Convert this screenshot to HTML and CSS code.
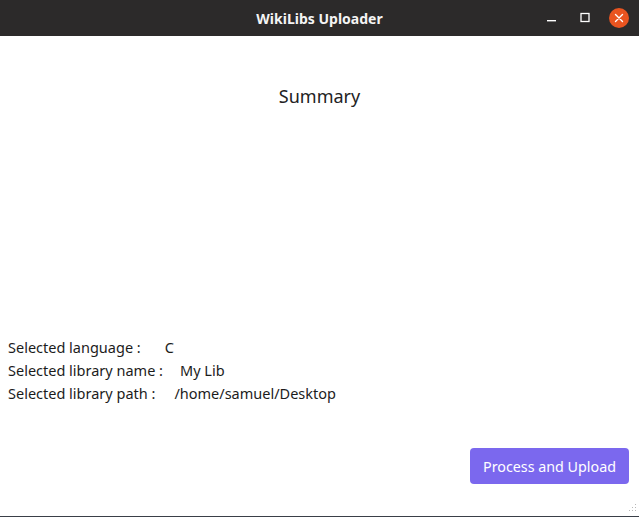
FILE: index.html
```html
<!DOCTYPE html>
<html>
<head>
<meta charset="utf-8">
<link rel="stylesheet" href="styles.css">
</head>
<body>
<div class="window">
  <header class="titlebar">
    <div class="title">WikiLibs Uploader</div>
    <div class="controls">
      <span class="ctl"><svg width="12" height="12" viewBox="0 0 12 12"><rect x="1" y="8" width="9" height="1.4" fill="#fff"/></svg></span>
      <span class="ctl"><svg width="12" height="12" viewBox="0 0 12 12"><rect x="2" y="1.5" width="8" height="8" fill="none" stroke="#fff" stroke-width="1.3"/></svg></span>
      <span class="ctl close"><svg width="10" height="10" viewBox="0 0 10 10"><path d="M1.5 1.5 L8.5 8.5 M8.5 1.5 L1.5 8.5" stroke="#fff" stroke-width="1.4" stroke-linecap="round"/></svg></span>
    </div>
  </header>
  <main class="content">
    <h1 class="heading">Summary</h1>
    <div class="info">
      <div class="row"><span class="label">Selected language :</span><span class="val v1">C</span></div>
      <div class="row"><span class="label">Selected library name :</span><span class="val v2">My Lib</span></div>
      <div class="row"><span class="label">Selected library path :</span><span class="val v3">/home/samuel/Desktop</span></div>
    </div>
    <div class="actions">
      <button class="btn">Process and Upload</button>
    </div>
  </main>
  <svg class="grip" width="10" height="10" viewBox="0 0 10 10">
    <g fill="#b8b8b8">
      <rect x="8" y="0" width="1" height="1"/>
      <rect x="5" y="3" width="1" height="1"/><rect x="8" y="3" width="1" height="1"/>
      <rect x="2" y="6" width="1" height="1"/><rect x="5" y="6" width="1" height="1"/><rect x="8" y="6" width="1" height="1"/>
    </g>
  </svg>
</div>
</body>
</html>
```

FILE: styles.css
```css
* { box-sizing: border-box; }
html, body { margin: 0; padding: 0; }
body {
  width: 639px;
  height: 517px;
  background: #3a3f48;
  font-family: "Noto Sans", "Open Sans", sans-serif;
  overflow: hidden;
}
.window {
  position: relative;
  width: 639px;
  height: 516px;
  background: #ffffff;
  display: flex;
  flex-direction: column;
}
.titlebar {
  height: 36px;
  background: #2c2a2a;
  display: flex;
  align-items: center;
  justify-content: center;
  position: relative;
}
.title {
  color: #f4f4f4;
  font-weight: bold;
  font-size: 14px;
}
.controls {
  position: absolute;
  right: 10px;
  top: 0;
  height: 36px;
  display: flex;
  align-items: center;
  gap: 15px;
}
.ctl {
  width: 18px;
  height: 18px;
  display: flex;
  align-items: center;
  justify-content: center;
}
.ctl.close {
  width: 20px;
  height: 20px;
  background: #e95420;
  border-radius: 50%;
}
.content {
  flex: 1;
  display: flex;
  flex-direction: column;
}
.heading {
  margin: 48px 0 0;
  text-align: center;
  font-weight: normal;
  font-size: 18px;
  line-height: 24px;
  color: #222;
}
.info {
  margin-top: 228px;
  padding-left: 8px;
  font-size: 14.5px;
  color: #1c1c1c;
}
.row {
  height: 23px;
  line-height: 23px;
  display: flex;
}
.v1 { margin-left: 24px; }
.v2 { margin-left: 17px; }
.v3 { margin-left: 19px; }
.actions {
  margin-top: 43px;
  display: flex;
  justify-content: flex-end;
  padding-right: 10px;
}
.btn {
  width: 159px;
  height: 36px;
  border: none;
  border-radius: 4px;
  background: #7b68ee;
  color: #fff;
  font-family: inherit;
  font-size: 14.3px;
}
.grip {
  position: absolute;
  right: 2px;
  bottom: 2px;
}
```
